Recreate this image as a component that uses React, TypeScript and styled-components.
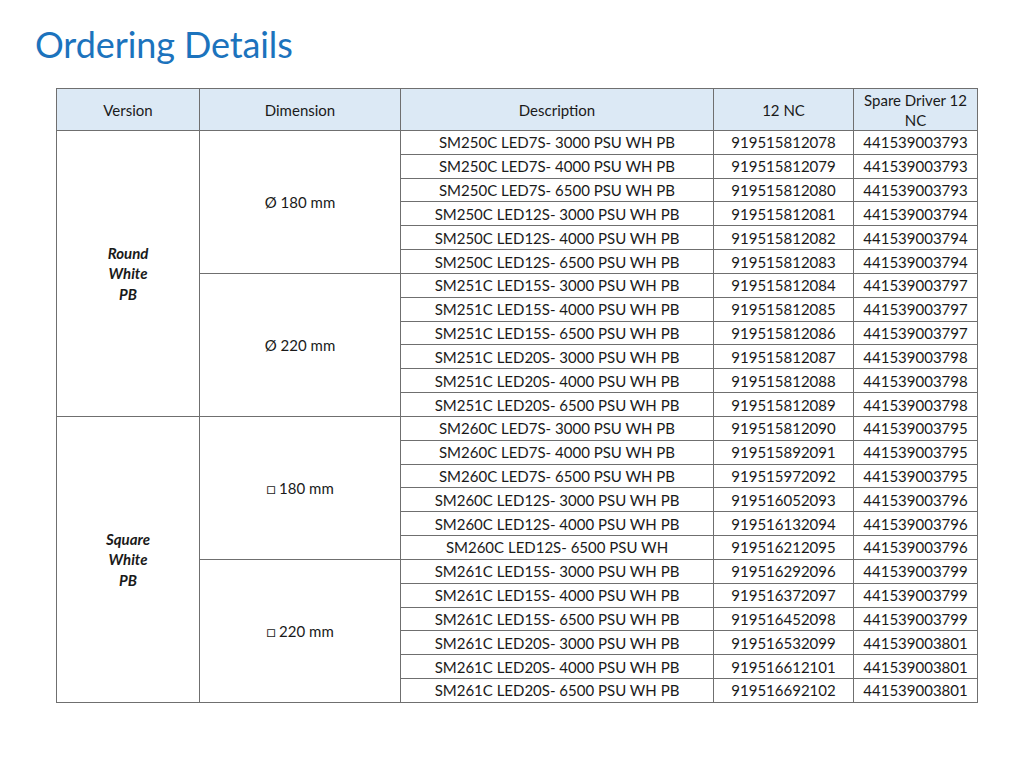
import React from "react";
import styled, { createGlobalStyle } from "styled-components";

const GlobalStyle = createGlobalStyle`
  html, body {
    margin: 0;
    padding: 0;
    background: #ffffff;
  }
  body {
    font-family: Lato, "Open Sans", sans-serif;
    color: #1a1a1a;
  }
`;

const Page = styled.div`
  width: 1024px;
  height: 768px;
  box-sizing: border-box;
  padding: 22px 0 0 56px;
`;

const Title = styled.h1`
  margin: 0 0 22px -21px;
  font-family: Lato, sans-serif;
  font-weight: 400;
  font-size: 36px;
  line-height: 44px;
  color: #1c73bd;
  letter-spacing: -0.1px;
`;

const Table = styled.table`
  border-collapse: collapse;
  table-layout: fixed;
  width: 921px;
  font-size: 15px;
`;

const Col = styled.col<{ $w: number }>`
  width: ${({ $w }) => $w}px;
`;

const HeadCell = styled.th`
  height: 41px;
  padding: 0 4px;
  background: #dce9f5;
  border: 1px solid #6f6f6f;
  font-weight: 400;
  line-height: 20px;
  text-align: center;
  vertical-align: middle;
`;

const Row = styled.tr`
  height: 23.83px;
`;

const Cell = styled.td`
  padding: 0 2px;
  border: 1px solid #6f6f6f;
  text-align: center;
  vertical-align: middle;
  line-height: 20px;
  white-space: nowrap;
  overflow: hidden;
`;

const GroupCell = styled(Cell)`
  font-weight: 700;
  font-style: italic;
  line-height: 20.5px;
  white-space: normal;
`;

type Item = { desc: string; nc: string; spare: string };

type Group = {
  version: string[];
  dims: { label: string; items: Item[] }[];
};

const item = (desc: string, nc: string, spare: string): Item => ({ desc, nc, spare });

const GROUPS: Group[] = [
  {
    version: ["Round", "White", "PB"],
    dims: [
      {
        label: "Ø 180 mm",
        items: [
          item("SM250C LED7S- 3000 PSU WH PB", "919515812078", "441539003793"),
          item("SM250C LED7S- 4000 PSU WH PB", "919515812079", "441539003793"),
          item("SM250C LED7S- 6500 PSU WH PB", "919515812080", "441539003793"),
          item("SM250C LED12S- 3000 PSU WH PB", "919515812081", "441539003794"),
          item("SM250C LED12S- 4000 PSU WH PB", "919515812082", "441539003794"),
          item("SM250C LED12S- 6500 PSU WH PB", "919515812083", "441539003794"),
        ],
      },
      {
        label: "Ø 220 mm",
        items: [
          item("SM251C LED15S- 3000 PSU WH PB", "919515812084", "441539003797"),
          item("SM251C LED15S- 4000 PSU WH PB", "919515812085", "441539003797"),
          item("SM251C LED15S- 6500 PSU WH PB", "919515812086", "441539003797"),
          item("SM251C LED20S- 3000 PSU WH PB", "919515812087", "441539003798"),
          item("SM251C LED20S- 4000 PSU WH PB", "919515812088", "441539003798"),
          item("SM251C LED20S- 6500 PSU WH PB", "919515812089", "441539003798"),
        ],
      },
    ],
  },
  {
    version: ["Square", "White", "PB"],
    dims: [
      {
        label: "□ 180 mm",
        items: [
          item("SM260C LED7S- 3000 PSU WH PB", "919515812090", "441539003795"),
          item("SM260C LED7S- 4000 PSU WH PB", "919515892091", "441539003795"),
          item("SM260C LED7S- 6500 PSU WH PB", "919515972092", "441539003795"),
          item("SM260C LED12S- 3000 PSU WH PB", "919516052093", "441539003796"),
          item("SM260C LED12S- 4000 PSU WH PB", "919516132094", "441539003796"),
          item("SM260C LED12S- 6500 PSU WH", "919516212095", "441539003796"),
        ],
      },
      {
        label: "□ 220 mm",
        items: [
          item("SM261C LED15S- 3000 PSU WH PB", "919516292096", "441539003799"),
          item("SM261C LED15S- 4000 PSU WH PB", "919516372097", "441539003799"),
          item("SM261C LED15S- 6500 PSU WH PB", "919516452098", "441539003799"),
          item("SM261C LED20S- 3000 PSU WH PB", "919516532099", "441539003801"),
          item("SM261C LED20S- 4000 PSU WH PB", "919516612101", "441539003801"),
          item("SM261C LED20S- 6500 PSU WH PB", "919516692102", "441539003801"),
        ],
      },
    ],
  },
];

const WIDTHS = [143, 201, 313, 140, 124];

export default function App() {
  return (
    <Page>
      <GlobalStyle />
      <Title>Ordering Details</Title>
      <Table>
        <colgroup>
          {WIDTHS.map((w, i) => (
            <Col key={i} $w={w} />
          ))}
        </colgroup>
        <thead>
          <tr>
            <HeadCell>Version</HeadCell>
            <HeadCell>Dimension</HeadCell>
            <HeadCell>Description</HeadCell>
            <HeadCell>12 NC</HeadCell>
            <HeadCell>Spare Driver 12 NC</HeadCell>
          </tr>
        </thead>
        <tbody>
          {GROUPS.map((g) => {
            const total = g.dims.reduce((n, d) => n + d.items.length, 0);
            return g.dims.map((d, di) =>
              d.items.map((it, ii) => (
                <Row key={it.desc + it.nc}>
                  {di === 0 && ii === 0 && (
                    <GroupCell rowSpan={total}>
                      {g.version.map((line) => (
                        <div key={line}>{line}</div>
                      ))}
                    </GroupCell>
                  )}
                  {ii === 0 && <Cell rowSpan={d.items.length}>{d.label}</Cell>}
                  <Cell>{it.desc}</Cell>
                  <Cell>{it.nc}</Cell>
                  <Cell>{it.spare}</Cell>
                </Row>
              ))
            );
          })}
        </tbody>
      </Table>
    </Page>
  );
}
